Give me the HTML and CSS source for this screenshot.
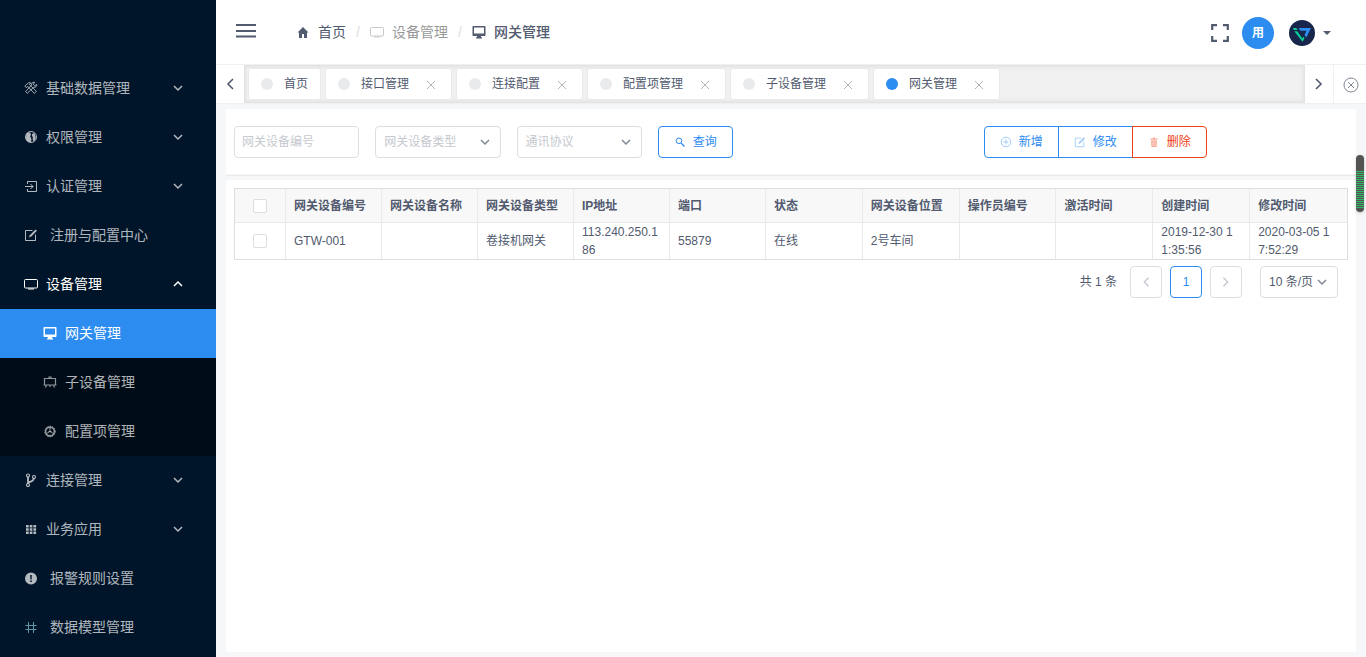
FILE: index.html
```html
<!DOCTYPE html>
<html lang="zh-CN">
<head>
<meta charset="utf-8">
<meta name="viewport" content="width=device-width, initial-scale=1">
<title>网关管理</title>
<link rel="stylesheet" href="styles.css">
</head>
<body>
<svg class="sprite" aria-hidden="true">
  <symbol id="down" viewBox="0 0 10 10"><path d="M1 3l4 4 4-4" fill="none" stroke="currentColor" stroke-width="1.5"/></symbol>
  <symbol id="left" viewBox="0 0 10 14"><path d="M8 2L3 7l5 5" fill="none" stroke="currentColor" stroke-width="1.6"/></symbol>
  <symbol id="right" viewBox="0 0 10 14"><path d="M2 2l5 5-5 5" fill="none" stroke="currentColor" stroke-width="1.6"/></symbol>
  <symbol id="cross" viewBox="0 0 14 14"><path d="M3 4l8 8M11 4l-8 8" fill="none" stroke="currentColor"/></symbol>
  <symbol id="tv" viewBox="0 0 14 14"><rect x=".5" y="2.5" width="13" height="8.500" rx="1" fill="none" stroke="currentColor"/><path d="M4 12h6" stroke="currentColor"/></symbol>
  <symbol id="desktop" viewBox="0 0 14 14"><path d="M1.200 1h11.600q.7 0 .7.700v8.600q0 .7-.7.700H9v1.200h1V13.500H4v-1.300h1V11H1.200q-.7 0-.7-.7V1.700Q.5 1 1.200 1zM2 2.400v6.200h10V2.400z" fill="currentColor" fill-rule="evenodd"/></symbol>
  <symbol id="edit" viewBox="0 0 14 14"><path d="M8.500 2.500h-7v10h10V6.500" fill="none" stroke="currentColor"/><path d="M5 9.500l.8-2.300L11.500 1.500l1.500 1.300-5.700 5.800z" fill="currentColor"/></symbol>
</svg>
<div class="app">
  <nav class="sidebar" aria-label="主菜单">
    <ul class="menu">
      <li><a class="item" href="#"><svg class="icon" viewBox="0 0 14 14"><path d="M.8 5l3.700-3.300 2.300.2-1.500 1.500 7 7-2 2-6.500-7-1.500 1.200zM12.700 3.500l-2 1.300-1.400-1.300 1.200-2.200c-2-.3-3.300 1-3 2.800L1.700 10.500l1.600 1.800 6.300-6c1.900.3 3.400-.8 3.100-2.800z" fill="none" stroke="currentColor" stroke-width=".9"/></svg>基础数据管理<svg class="arrow"><use href="#down"/></svg></a></li>
      <li><a class="item" href="#"><svg class="icon" viewBox="0 0 14 14"><circle cx="7" cy="7" r="5.500" fill="none" stroke="currentColor"/><path d="M2.500 4q2-2 3.500-1.200c1.300.8.800 2.500.3 3.500-.3 1 .7 1.200 1 2.200.2 1 0 2.500-.3 3.500-3 .2-4.600-1-5-4zM7.800 5q.3-1.800 1.900-1.700 1.600.2 1.300 2.200c1.300 1.500.5 4.300-1.200 5.800-1.200-.8-1.300-2.500-.9-3.700z" fill="currentColor"/></svg>权限管理<svg class="arrow"><use href="#down"/></svg></a></li>
      <li><a class="item" href="#"><svg class="icon" viewBox="0 0 14 14"><path d="M3.500 5V2.500h9v10h-9V10M1 7.500h8M6.500 5L9 7.500 6.500 10" fill="none" stroke="currentColor"/></svg>认证管理<svg class="arrow"><use href="#down"/></svg></a></li>
      <li><a class="item leaf" href="#"><svg class="icon"><use href="#edit"/></svg>注册与配置中心</a></li>
      <li><a class="item open" href="#"><svg class="icon"><use href="#tv"/></svg>设备管理<svg class="arrow up"><use href="#down"/></svg></a>
        <ul class="submenu">
          <li><a class="item active" href="#" aria-current="page"><svg class="icon"><use href="#desktop"/></svg>网关管理</a></li>
          <li><a class="item dim" href="#"><svg class="icon" viewBox="0 0 14 14"><path d="M1.500 3.500h11v6.500h-11zM3.500 10l-1 2.500M10.500 10l1 2.500M7 10v2M6 3V2h2v1M.5 10h13" fill="none" stroke="currentColor" stroke-width="1.200"/></svg>子设备管理</a></li>
          <li><a class="item dim" href="#"><svg class="icon" viewBox="0 0 14 14"><circle cx="7" cy="7.500" r="4.400" fill="none" stroke="currentColor" stroke-width="1.600"/><circle cx="7" cy="7.500" r="5.300" fill="none" stroke="currentColor" stroke-dasharray="1.200 1.200"/><path d="M7 3v4.500L3.500 9.500M7 7.500l3.500 2M5.500 7.500h3" fill="none" stroke="currentColor"/></svg>配置项管理</a></li>
        </ul>
      </li>
      <li><a class="item" href="#"><svg class="icon" viewBox="0 0 14 14"><g fill="none" stroke="currentColor" stroke-width="1.200"><circle cx="4" cy="2.500" r="1.500"/><circle cx="4" cy="12" r="1.500"/><circle cx="10" cy="4" r="1.500"/></g><path d="M4 4v6.500M4.500 9.500C7 8.500 9.500 8.500 9.800 5.500" fill="none" stroke="currentColor" stroke-width="1.800"/></svg>连接管理<svg class="arrow"><use href="#down"/></svg></a></li>
      <li><a class="item" href="#"><svg class="icon" viewBox="0 0 14 14"><path d="M2 3h2.700v2.500H2zM5.700 3h2.700v2.500H5.700zM9.400 3h2.700v2.500H9.400zM2 6.300h2.700v2.500H2zM5.700 6.300h2.700v2.500H5.700zM9.400 6.300h2.700v2.500H9.400zM2 9.600h2.700v2.500H2zM5.700 9.600h2.700v2.500H5.700zM9.400 9.600h2.700v2.500H9.400z" fill="currentColor"/></svg>业务应用<svg class="arrow"><use href="#down"/></svg></a></li>
      <li><a class="item leaf" href="#"><svg class="icon" viewBox="0 0 14 14"><path d="M7 1.500a6 6 0 100 12 6 6 0 000-12zM6.200 4h1.600l-.2 4.500H6.400zM6.200 9.500h1.600V11H6.200z" fill="currentColor" fill-rule="evenodd"/></svg>报警规则设置</a></li>
      <li><a class="item leaf" href="#"><svg class="icon teal" viewBox="0 0 14 14"><path d="M4.500 2v11M9.500 2v11M1.500 5.500h11M1.500 9.500h11" fill="none" stroke="currentColor"/></svg>数据模型管理</a></li>
    </ul>
  </nav>
  <div class="page">
    <header class="topbar">
      <button class="bare fold" type="button" aria-label="折叠菜单"><svg width="20" height="14" viewBox="0 0 20 14"><path d="M0 1h20M0 7h20M0 12.500h20" stroke="currentColor" stroke-width="2"/></svg></button>
      <nav class="crumbs" aria-label="面包屑">
        <a href="#"><svg class="icon" viewBox="0 0 14 14"><path d="M7 2L1.500 7.500H3V13h3V9h2v4h3V7.500h1.500z" fill="currentColor"/></svg>首页</a>
        <span class="slash">/</span>
        <span class="muted"><svg class="icon"><use href="#tv"/></svg>设备管理</span>
        <span class="slash">/</span>
        <span class="current"><svg class="icon"><use href="#desktop"/></svg>网关管理</span>
      </nav>
      <div class="tools">
        <button class="bare" type="button" aria-label="全屏"><svg width="18" height="18" viewBox="0 0 18 18"><path d="M1.200 6V1.200H6M12 1.200h4.800V6M16.800 12v4.800H12M6 16.800H1.200V12" fill="none" stroke="currentColor" stroke-width="2.200"/></svg></button>
        <span class="avatar">用</span>
        <button class="bare account" type="button" aria-label="账户"><svg width="26" height="26" viewBox="0 0 26 26"><circle cx="13" cy="13" r="13" fill="#17264a"/><path d="M9.500 8H22l-4.700 9.500-1.800-2.500 2-4.200h-6z" fill="#2d8cf0"/><path d="M3.800 8h3.400l1.300 2H5zM5.300 11.200h3l5 7.300 1-2 1.200 1.700-2 3.600z" fill="#09cf9b"/></svg><svg width="8" height="4" viewBox="0 0 8 4"><path d="M0 0h8L4 4z" fill="currentColor"/></svg></button>
      </div>
    </header>
    <div class="tabbar">
      <button class="scroll" type="button" aria-label="向左"><svg width="10" height="14"><use href="#left"/></svg></button>
      <div class="tabs">
        <div class="tab"><i class="dot"></i><a href="#">首页</a></div>
        <div class="tab"><i class="dot"></i><a href="#">接口管理</a><button class="close" type="button" aria-label="关闭接口管理"><svg><use href="#cross"/></svg></button></div>
        <div class="tab"><i class="dot"></i><a href="#">连接配置</a><button class="close" type="button" aria-label="关闭连接配置"><svg><use href="#cross"/></svg></button></div>
        <div class="tab"><i class="dot"></i><a href="#">配置项管理</a><button class="close" type="button" aria-label="关闭配置项管理"><svg><use href="#cross"/></svg></button></div>
        <div class="tab"><i class="dot"></i><a href="#">子设备管理</a><button class="close" type="button" aria-label="关闭子设备管理"><svg><use href="#cross"/></svg></button></div>
        <div class="tab"><i class="dot on"></i><a href="#">网关管理</a><button class="close" type="button" aria-label="关闭网关管理"><svg><use href="#cross"/></svg></button></div>
      </div>
      <button class="scroll" type="button" aria-label="向右"><svg width="10" height="14"><use href="#right"/></svg></button>
      <button class="scroll closeall" type="button" aria-label="关闭全部"><svg width="16" height="16" viewBox="0 0 16 16"><circle cx="8" cy="8" r="7" fill="none" stroke="currentColor"/><path d="M5 5l6 6M11 5l-6 6" stroke="currentColor"/></svg></button>
    </div>
    <main class="content">
      <form class="card filters">
        <input class="field" type="text" placeholder="网关设备编号" aria-label="网关设备编号">
        <div class="pick"><select class="field empty" aria-label="网关设备类型"><option>网关设备类型</option></select><svg><use href="#down"/></svg></div>
        <div class="pick"><select class="field empty" aria-label="通讯协议"><option>通讯协议</option></select><svg><use href="#down"/></svg></div>
        <button class="btn search" type="button"><svg viewBox="0 0 12 12"><circle cx="5" cy="4.800" r="2.800" fill="none" stroke="currentColor"/><path d="M7 7l3.500 3.500" stroke="currentColor" stroke-width="1.300"/></svg>查询</button>
        <div class="actions">
          <button class="btn soft" type="button"><svg viewBox="0 0 12 12"><circle cx="6" cy="6" r="4.700" fill="none" stroke="currentColor"/><path d="M6 3.500v5M3.500 6h5" stroke="currentColor"/></svg>新增</button>
          <button class="btn soft" type="button"><svg><use href="#edit"/></svg>修改</button>
          <button class="btn soft danger" type="button"><svg viewBox="0 0 12 12"><path d="M2.500 2.500H5v-1h2v1h2.500v1.200h-7zM3 4.500h6L8.500 11h-5z" fill="currentColor"/><path d="M5 5.500v4.500M7 5.500v4.500" stroke="#fff" stroke-width=".6"/></svg>删除</button>
        </div>
      </form>
      <hr class="rule">
      <section class="card results">
        <table class="grid">
          <colgroup><col class="checkcol"><col class="fixcol" span="5"><col span="6"></colgroup>
          <thead><tr><th class="check"><input type="checkbox" aria-label="全选"></th><th>网关设备编号</th><th>网关设备名称</th><th>网关设备类型</th><th>IP地址</th><th>端口</th><th>状态</th><th>网关设备位置</th><th>操作员编号</th><th>激活时间</th><th>创建时间</th><th>修改时间</th></tr></thead>
          <tbody><tr><td class="check"><input type="checkbox" aria-label="选择 GTW-001"></td><td>GTW-001</td><td></td><td>卷接机网关</td><td>113.240.250.186</td><td>55879</td><td>在线</td><td>2号车间</td><td></td><td></td><td class="time">2019-12-30 11:35:56</td><td class="time">2020-03-05 17:52:29</td></tr></tbody>
        </table>
        <div class="pager">
          <span class="total">共 1 条</span>
          <button class="pg" type="button" aria-label="上一页" disabled><svg width="10" height="12"><use href="#left"/></svg></button>
          <button class="pg on" type="button">1</button>
          <button class="pg" type="button" aria-label="下一页" disabled><svg width="10" height="12"><use href="#right"/></svg></button>
          <div class="pick size"><select class="field" aria-label="每页条数"><option>10 条/页</option></select><svg><use href="#down"/></svg></div>
        </div>
      </section>
    </main>
  </div>
</div>
<div class="thumb"></div>
</body>
</html>
```
FILE: styles.css
```css
* { box-sizing: border-box; }
body {
  margin: 0;
  font: 12px/18px "Liberation Sans", "Noto Sans CJK SC", sans-serif;
  color: #515a6e;
  background: #f5f7f9;
}
a { color: inherit; text-decoration: none; }
ul { list-style: none; margin: 0; padding: 0; }
button, input, select { font: inherit; color: inherit; margin: 0; }
button { cursor: pointer; }
svg { display: block; flex: none; }
.sprite { position: absolute; width: 0; height: 0; }
.icon { width: 14px; height: 14px; }
.app { display: flex; min-height: 100vh; }

.sidebar { flex: none; width: 216px; padding-top: 64px; background: #001529; color: rgba(255,255,255,.7); }
.item { display: flex; align-items: center; gap: 8px; height: 49px; padding: 0 33px 2px 24px; font-size: 14px; }
.item.leaf { gap: 12px; }
.item.open { color: #fff; }
.arrow { width: 10px; height: 10px; margin-left: auto; }
.arrow.up { transform: rotate(180deg); }
.teal { color: #5b98a5; }
.submenu { background: #000c17; }
.submenu .item { padding-left: 43px; }
.dim .icon { opacity: .8; }
.item.active { background: #2d8cf0; color: #fff; }

.page { flex: 1; min-width: 0; display: flex; flex-direction: column; }
.topbar { display: flex; align-items: center; height: 65px; padding: 0 35px 0 20px; background: #fff; border-bottom: 1px solid #f0f0f0; }
.bare { display: flex; align-items: center; padding: 0; border: 0; background: none; }
.fold { padding-bottom: 2px; }
.crumbs { display: flex; align-items: center; margin-left: 40px; font-size: 14px; }
.crumbs a, .crumbs span { display: flex; align-items: center; gap: 8px; }
.crumbs .slash { width: 24px; justify-content: center; color: #dcdee2; }
.crumbs .muted { color: #999; }
.muted .icon { color: #c8c8c8; }
.crumbs .current { font-weight: 500; }
.tools { display: flex; align-items: center; gap: 13px; margin-left: auto; padding-top: 2px; }
.avatar { width: 32px; height: 32px; border-radius: 50%; background: #2d8cf0; color: #fff; font-weight: 700; line-height: 32px; text-align: center; }
.account { gap: 8px; margin-left: 2px; }

.tabbar { display: flex; height: 39px; border-bottom: 1px solid #f0f0f0; background: #fff; }
.scroll { flex: none; display: flex; align-items: center; justify-content: center; width: 28px; padding: 0; border: 0; background: #fff; }
.closeall { width: 33px; padding: 2px 0 0 2px; border-left: 1px solid #f0f0f0; color: #808695; }
.tabs { flex: 1; min-width: 0; display: flex; gap: 4px; padding: 3px 4px; overflow: hidden; background: #f0f0f0; box-shadow: inset 0 0 3px 2px rgba(100,100,100,.1); }
.tab { flex: none; display: flex; align-items: center; height: 32px; padding: 0 12px; border: 1px solid #e8eaec; border-radius: 3px; background: #fff; }
.dot { width: 12px; height: 12px; margin-right: 11px; border-radius: 50%; background: #e8eaec; }
.dot.on { background: #2d8cf0; }
.close { padding: 0; margin-left: 15px; border: 0; background: none; color: #b4b4b4; }
.close svg { width: 14px; height: 14px; }
.tab:not(:first-child) { padding-right: 13px; }

.content { flex: 1; display: flex; flex-direction: column; padding: 5px 10px; }
.card { background: #fff; padding: 8px; }
.filters { display: grid; grid-template-columns: repeat(8, minmax(0, 1fr)); gap: 16px; padding: 17px 8px 16px; }
.rule { width: 100%; height: 1px; margin: 1px 0 4px; border: 0; background: #e8eaec; }
.results { flex: 1; }
.field { display: block; width: 100%; height: 32px; padding: 0 7px; border: 1px solid #dcdee2; border-radius: 4px; background: #fff; outline: 0; }
.field::placeholder { color: #c5c8ce; opacity: 1; }
select.field { appearance: none; padding: 0 8px; }
.empty { color: #c5c8ce; }
.pick { position: relative; }
.pick svg { position: absolute; right: 11px; top: 11px; width: 10px; height: 10px; color: #808695; pointer-events: none; }
.btn { display: flex; align-items: center; gap: 7px; height: 32px; padding: 0 15px; border: 1px solid #2d8cf0; border-radius: 4px; background: #fff; color: #2d8cf0; white-space: nowrap; }
.btn svg { width: 12px; height: 12px; }
.soft svg { opacity: .45; }
.search { justify-self: start; }
.actions { grid-column: 6 / 8; justify-self: end; display: flex; }
.actions .btn + .btn { margin-left: -1px; }
.actions .btn:not(:last-child) { border-top-right-radius: 0; border-bottom-right-radius: 0; }
.actions .btn:not(:first-child) { border-top-left-radius: 0; border-bottom-left-radius: 0; }
.danger { border-color: #ed4014; color: #ed4014; }

.grid { width: 100%; table-layout: fixed; border-collapse: separate; border-spacing: 0; border: 1px solid #dcdee2; }
.checkcol { width: 51px; }
.fixcol { width: 96px; }
.grid th, .grid td { padding: 0 10px 0 8px; border-right: 1px solid #e8eaec; text-align: left; word-break: break-all; }
.grid tr > :last-child { border-right: 0; }
.grid th { height: 34px; padding-right: 0; border-bottom: 1px solid #e8eaec; background: #f8f8f9; font-weight: 700; }
.grid td { height: 36px; }
.grid .time { padding-right: 12px; }
.grid .check { padding: 0; }
.check input { display: block; appearance: none; width: 14px; height: 14px; margin: 0 auto; border: 1px solid #dcdee2; border-radius: 2px; background: #fff; }
.pager { display: flex; justify-content: flex-end; align-items: center; gap: 8px; padding: 6px 10px 0 0; }
.total { margin-right: 5px; }
.pg { display: flex; align-items: center; justify-content: center; width: 32px; height: 32px; padding: 0; border: 1px solid #dcdee2; border-radius: 4px; background: #fff; }
.pg:disabled { color: #c5c8ce; }
.pg.on { border-color: #2d8cf0; color: #2d8cf0; }
.size { width: 78px; margin-left: 10px; }

.thumb { position: fixed; right: 2px; top: 155px; width: 8px; height: 57px; border-radius: 4px; background: repeating-linear-gradient(#32b767 0 1px, #535353 1px 2px) 0 16px / 100% 38px no-repeat #535353; box-shadow: 0 1px 3px rgba(0,0,0,.2); }
```
